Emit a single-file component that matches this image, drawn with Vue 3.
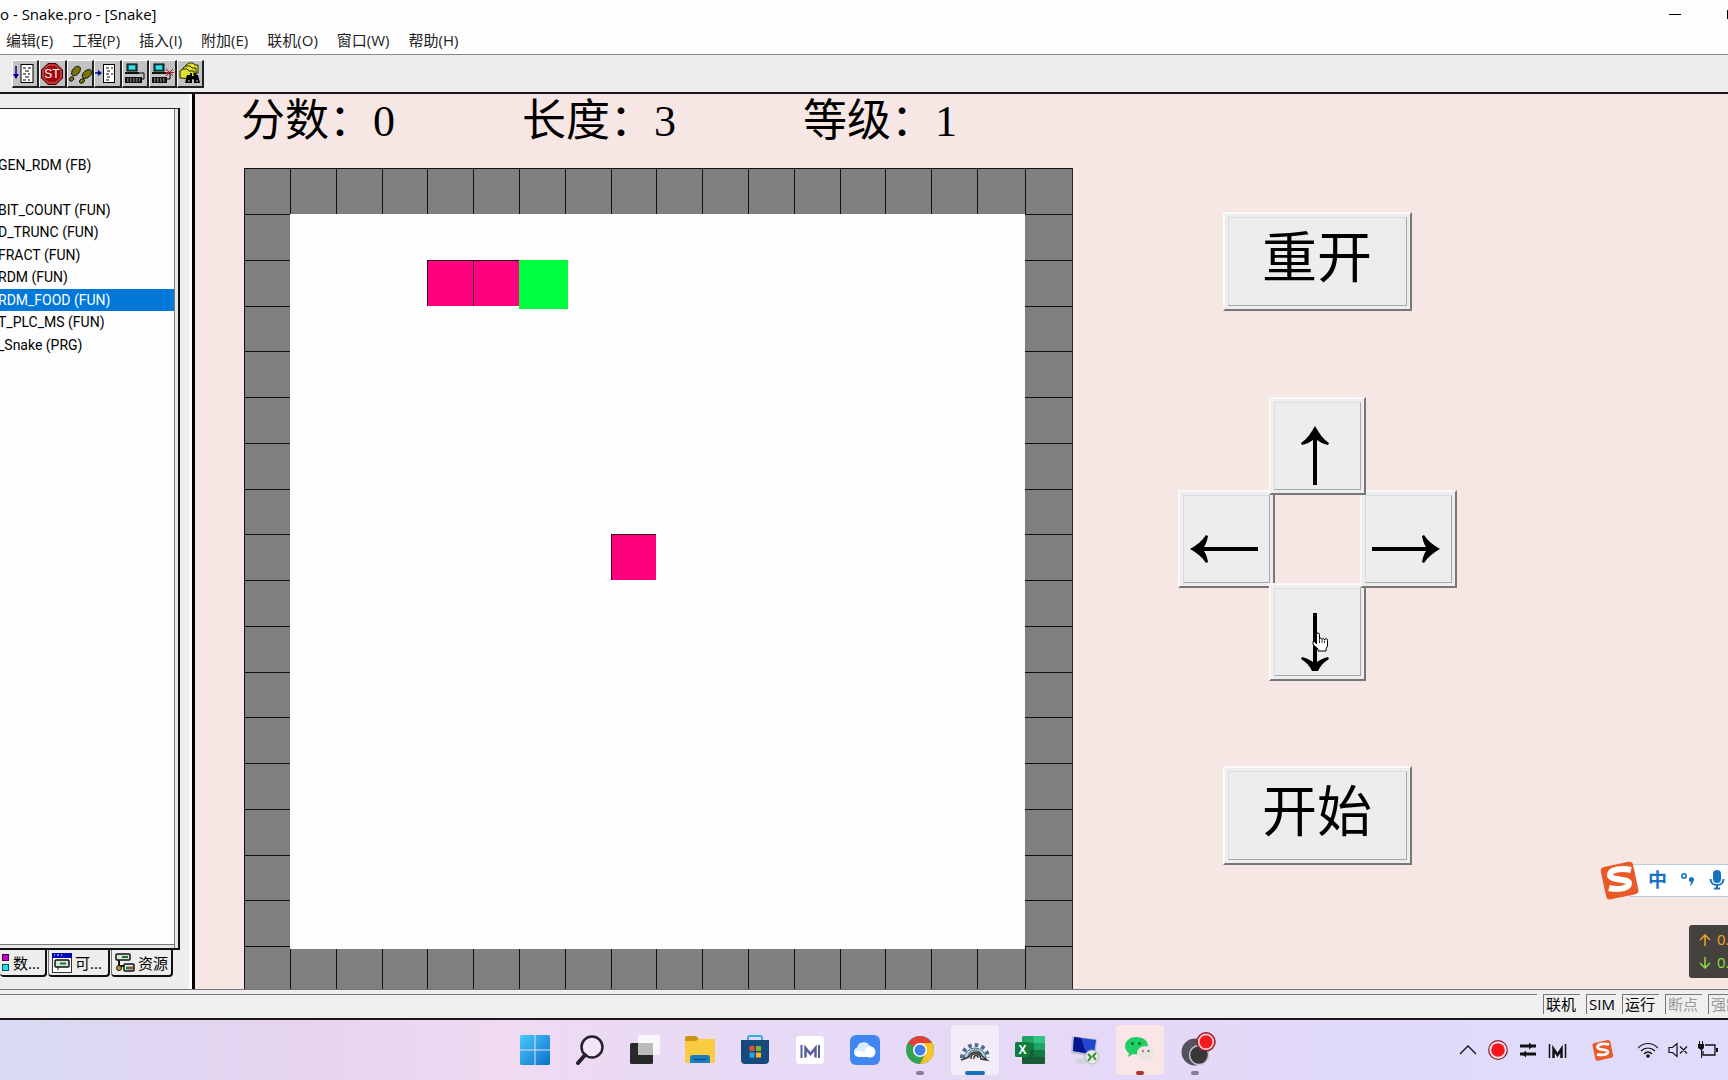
<script setup>
import { ref } from 'vue'

const menus = ['编辑(E)', '工程(P)', '插入(I)', '附加(E)', '联机(O)', '窗口(W)', '帮助(H)']

const pous = [
  'GEN_RDM (FB)',
  '',
  'BIT_COUNT (FUN)',
  'D_TRUNC (FUN)',
  'FRACT (FUN)',
  'RDM (FUN)',
  'RDM_FOOD (FUN)',
  'T_PLC_MS (FUN)',
  '_Snake (PRG)',
]
const selected = ref('RDM_FOOD (FUN)')

const stats = [
  { label: '分数', value: 0 },
  { label: '长度', value: 3 },
  { label: '等级', value: 1 },
]

const SIZE = 18
const walls = []
for (let row = 1; row <= SIZE; row++) {
  for (let col = 1; col <= SIZE; col++) {
    if (row > 1 && row < SIZE && col > 1 && col < SIZE) continue
    walls.push({
      row,
      col,
      noTop: row === SIZE && col > 1 && col < SIZE,
      noLeft: col === SIZE && row > 1 && row < SIZE,
    })
  }
}
const pieces = [
  { kind: 'body', row: 3, col: 5 },
  { kind: 'body', row: 3, col: 6 },
  { kind: 'head', row: 3, col: 7 },
  { kind: 'food', row: 9, col: 9 },
]
const place = (c) => ({ gridRow: c.row, gridColumn: c.col })

const status = [
  { text: '联机' },
  { text: 'SIM', small: true },
  { text: '运行' },
  { text: '断点', off: true },
  { text: '强制', off: true },
]
</script>

<template>
  <div class="app" lang="zh-CN">
    <header class="titlebar">
      <span class="title">o - Snake.pro - [Snake]</span>
      <div class="winctl">
        <button class="min" aria-label="最小化"></button>
        <button class="max" aria-label="最大化"></button>
      </div>
    </header>

    <nav class="menubar">
      <button v-for="m in menus" :key="m">{{ m }}</button>
    </nav>

    <div class="toolbar">
      <div class="tools">
        <button aria-label="单步进入">
          <svg viewBox="0 0 24 24">
            <rect x="8" y="2.500" width="12" height="18" fill="#fff" stroke="#000" />
            <path d="M10 6h3m2 0h3M12 9h4M10 12h3m2 0h2M12 15h4M10 18h3m2 0h2" stroke="#000" />
            <path d="M3 4v12" stroke="#00009c" stroke-width="1.500" />
            <path d="M0 12h6l-3 5z" fill="#00009c" />
          </svg>
        </button>
        <button aria-label="停止">
          <svg viewBox="0 0 24 24">
            <path d="M8 1.500h8L22.500 8v8L16 22.500H8L1.500 16V8z" fill="#a3080c" stroke="#4a0000" />
            <path d="M8.500 3h7L21 8.500v7L15.500 21h-7L3 15.500v-7z" fill="none" stroke="#d99" stroke-width=".7" />
            <text x="12" y="16" text-anchor="middle" class="st">ST</text>
          </svg>
        </button>
        <button aria-label="单步">
          <svg viewBox="0 0 24 24">
            <g fill="#77750a" stroke="#000" stroke-width=".8">
              <ellipse cx="8" cy="9" rx="5.500" ry="3.500" transform="rotate(-50 8 9)" />
              <ellipse cx="3.500" cy="17" rx="2.500" ry="2" transform="rotate(-40 3.500 17)" />
              <ellipse cx="19" cy="12" rx="5.500" ry="3.500" transform="rotate(-40 19 12)" />
              <ellipse cx="14" cy="19" rx="2.800" ry="2" transform="rotate(-30 14 19)" />
            </g>
          </svg>
        </button>
        <button aria-label="运行到光标">
          <svg viewBox="0 0 24 24">
            <rect x="8.500" y="2.500" width="11" height="18" fill="#fff" stroke="#000" />
            <path d="M11 6h3m2 0h2M12 9h3M11 12h3m2 0h2M12 15h3M11 18h3" stroke="#000" />
            <path d="M0 11h4" stroke="#00009c" stroke-width="1.500" />
            <path d="M3 8l4 3-4 3z" fill="#00009c" />
          </svg>
        </button>
        <button aria-label="登录">
          <svg viewBox="0 0 24 24">
            <rect x="4" y="2" width="10" height="7" fill="#0b6f78" stroke="#000" />
            <rect x="6" y="3.500" width="6" height="4" fill="#3fe0e0" />
            <path d="M2 10h14v2H2zM2 15h17v6H2z" fill="#111" />
            <path d="M16 11h5v6h-3" fill="none" stroke="#000" />
            <path d="M4 17h13M4 19h13" stroke="#bbb" stroke-dasharray="1.500 1.500" />
          </svg>
        </button>
        <button aria-label="注销">
          <svg viewBox="0 0 24 24">
            <rect x="4" y="2" width="10" height="7" fill="#0b6f78" stroke="#000" />
            <rect x="6" y="3.500" width="6" height="4" fill="#3fe0e0" />
            <path d="M2 10h14v2H2zM2 15h15v6H2z" fill="#111" />
            <path d="M15 11h5v6h-3" fill="none" stroke="#000" />
            <path d="M4 17h12M4 19h12" stroke="#bbb" stroke-dasharray="1.500 1.500" />
            <path d="M16 7l7 7m0-7l-7 7M15 10.500h9" stroke="#b01020" />
          </svg>
        </button>
        <button aria-label="全局查找">
          <svg viewBox="0 0 24 24">
            <g fill="#dede2c" stroke="#000" stroke-width=".8">
              <path d="M8 3l3-2h4l2 2h3v8H8z" />
              <path d="M5 6l3-2h4l2 2h4v8H5z" />
              <path d="M2 9l3-2h4l2 2h5v8l-14-1z" />
            </g>
            <path d="M9 13h3v-2h2v3h2v-3h2v2h2l2 8h-6v-4h-2v4H7z" fill="#000" />
            <path d="M10 19h2m6 0h2" stroke="#ddd" />
          </svg>
        </button>
      </div>
    </div>

    <main class="workspace">
      <aside class="sidebar">
        <div class="tree">
          <ul>
            <li v-for="(p, i) in pous" :key="i" :class="{ on: p === selected }">{{ p }}</li>
          </ul>
        </div>
        <div class="tabs">
          <button class="tab cut">
            <svg viewBox="0 0 20 20" class="ticon">
              <path d="M9 5H4v10h6M4 10H0" fill="none" stroke="#555" />
              <rect x="12.500" y="1.500" width="6" height="6" fill="#c800c8" stroke="#404" />
              <rect x="12.500" y="11.500" width="6" height="6" fill="#17e0ea" stroke="#055" />
            </svg>
            <span>数...</span>
          </button>
          <button class="tab">
            <svg viewBox="0 0 20 20" class="ticon">
              <rect x=".5" y=".5" width="19" height="19" fill="#fff" stroke="#333" />
              <rect x="0" y="0" width="20" height="5" fill="#0606bb" />
              <path d="M2 2h1m2 0h2m2 0h1" stroke="#fff" />
              <rect x="3" y="7" width="14" height="7" rx="1" fill="#d5ead5" stroke="#111" stroke-width="1.500" />
              <path d="M8 10.500h6" stroke="#286b38" stroke-width="2" />
              <path d="M6 14v3" stroke="#111" />
            </svg>
            <span>可...</span>
          </button>
          <button class="tab">
            <svg viewBox="0 0 20 20" class="ticon">
              <rect x="1" y="1" width="14" height="6" rx="1" fill="#d5ead5" stroke="#111" stroke-width="1.500" />
              <path d="M7 4h6" stroke="#286b38" stroke-width="2" />
              <path d="M4 7v10M4 13h6" stroke="#111" stroke-width="2" />
              <rect x="9" y="11" width="10" height="7" rx="1" fill="#eee" stroke="#111" stroke-width="1.500" />
              <path d="M11 15h4" stroke="#1d8a38" stroke-width="3" />
              <path d="M15 15h3" stroke="#c33" stroke-width="3" />
              <circle cx="4" cy="15" r="2.500" fill="#b9a400" stroke="#111" />
            </svg>
            <span>资源</span>
          </button>
        </div>
      </aside>

      <section class="canvas">
        <div class="game">
          <div class="stats">
            <span v-for="s in stats" :key="s.label">{{ s.label }}：{{ s.value }}</span>
          </div>
          <div class="board">
            <i v-for="w in walls" :key="w.row + '-' + w.col" class="wall" :class="{ noTop: w.noTop, noLeft: w.noLeft }" :style="place(w)"></i>
            <i class="field"></i>
            <i v-for="(p, i) in pieces" :key="i" class="piece" :class="p.kind" :style="place(p)"></i>
          </div>
        </div>

        <div class="controls">
          <button class="raised wide">重开</button>
          <div class="pad">
            <button class="raised dir left" aria-label="左">
              <svg viewBox="0 0 68 28" width="68" height="28"><path d="M0 14C7 10 12 6 16 0l2 1c-1 5-2 8-4 11h54v4H14c2 3 3 6 4 11l-2 1C12 22 7 18 0 14z" /></svg>
            </button>
            <button class="raised dir down" aria-label="下">
              <svg viewBox="0 0 28 60" width="28" height="60"><path d="M11 59C9 54 5 50 0 47l1-2c5 1 8 3 11 5V1h4v49c3-2 6-4 11-5l1 2c-5 3-9 7-11 12z" /></svg>
              <svg class="hand" viewBox="0 0 17 20" width="17" height="20">
                <path d="M4.500 12V2.500a1.500 1.500 0 0 1 3 0V7a1.300 1.300 0 0 1 2.500 0v.5a1.300 1.300 0 0 1 2.500.5 1.300 1.300 0 0 1 3 .5V14l-1.500 3v2h-8v-2L1 12.500V9.500h1.500z" fill="#fff" stroke="#000" />
                <path d="M7.500 7v4M10 8v3M12.500 8.500V11" stroke="#000" stroke-width=".8" />
              </svg>
            </button>
            <button class="raised dir right" aria-label="右">
              <svg viewBox="0 0 68 28" width="68" height="28"><path d="M68 14C61 10 56 6 52 0l-2 1c1 5 2 8 4 11H0v4h54c-2 3-3 6-4 11l2 1c4-6 9-10 16-14z" /></svg>
            </button>
            <button class="raised dir up" aria-label="上">
              <svg viewBox="0 0 28 60" width="28" height="60"><path d="M14 0C10 7 6 13 0 17l1 2c5-1 8-3 11-5v45h4V14c3 2 6 4 11 5l1-2C22 13 18 7 14 0z" /></svg>
            </button>
          </div>
          <button class="raised wide">开始</button>
        </div>

        <div class="ime">
          <svg class="imelogo" viewBox="0 0 40 40" width="40" height="40">
            <rect x="3" y="4" width="33" height="33" rx="4" fill="#ea5a28" transform="rotate(-12 20 20)" />
            <path d="M31 10C22 8 10 9 10 15c0 6 20 3 19 9-1 5-12 6-20 4" fill="none" stroke="#fff" stroke-width="6" />
          </svg>
          <div class="imebar">
            <b>中</b>
            <svg viewBox="0 0 16 16" width="16" height="16"><circle cx="4" cy="4" r="2.200" fill="none" stroke="#1673c4" stroke-width="1.600" /><path d="M9 7a2.500 2.500 0 1 1 4.500 2c-1 3-2 4-4 5 1-2 1.500-3 1.500-4A2.500 2.500 0 0 1 9 7z" fill="#1673c4" /></svg>
            <svg viewBox="0 0 16 20" width="16" height="20"><rect x="4" y="0" width="8" height="13" rx="4" fill="#1673c4" /><path d="M1.500 9c0 8 13 8 13 0M8 15v4M5 18.500h6" fill="none" stroke="#1673c4" stroke-width="2" /></svg>
          </div>
        </div>

        <div class="net">
          <span class="upl"><svg viewBox="0 0 12 12" width="12" height="12"><path d="M6 12V1M1 6l5-5 5 5" /></svg>0.1K</span>
          <span class="dnl"><svg viewBox="0 0 12 12" width="12" height="12"><path d="M6 0v11M1 6l5 5 5-5" /></svg>0.1K</span>
        </div>
      </section>
    </main>

    <footer class="status">
      <span class="msg"></span>
      <span v-for="s in status" :key="s.text" class="ind" :class="{ off: s.off, small: s.small }">{{ s.text }}</span>
    </footer>

    <footer class="taskbar">
      <span></span>
      <div class="apps">
        <button aria-label="开始菜单">
          <svg viewBox="0 0 30 30" width="30" height="30">
            <defs><linearGradient id="win" x1="0" y1="0" x2="1" y2="1"><stop offset="0" stop-color="#4cc8fb" /><stop offset="1" stop-color="#0672cb" /></linearGradient></defs>
            <rect width="30" height="30" rx="1.500" fill="url(#win)" />
            <path d="M15 0v30M0 15h30" stroke="#ecdcf6" />
          </svg>
        </button>
        <button aria-label="搜索">
          <svg viewBox="0 0 30 30" width="30" height="30"><circle cx="17" cy="12" r="10.500" fill="#ffffff55" stroke="#25222b" stroke-width="2.500" /><path d="M10 20l-7 8" stroke="#25222b" stroke-width="4" stroke-linecap="round" /></svg>
        </button>
        <button aria-label="任务视图">
          <svg viewBox="0 0 30 30" width="30" height="30"><rect x="0" y="8" width="23" height="21" rx="1.500" fill="#2a2929" /><rect x="8" y="0" width="22" height="20" rx="1.500" fill="#fff" fill-opacity=".75" /><path d="M8 8h15v12H8z" fill="#bbb" /></svg>
        </button>
        <button aria-label="文件资源管理器">
          <svg viewBox="0 0 30 30" width="30" height="30"><path d="M0 3q0-2 2-2h9l3 3v6H0z" fill="#c99513" /><path d="M0 6h11l3-2h16v22q0 2-2 2H2q-2 0-2-2z" fill="#fbcb40" /><path d="M5 28v-5q0-3 3-3h14q3 0 3 3v5z" fill="#1c7cc0" /><path d="M9 24.500h12" stroke="#0b4f86" stroke-width="1.500" /></svg>
        </button>
        <button aria-label="应用商店">
          <svg viewBox="0 0 30 30" width="30" height="30"><path d="M8 6V3q0-2 2-2h10q2 0 2 2v3" fill="none" stroke="#35aee3" stroke-width="2" /><path d="M1 5h28v20q0 4-4 4H5q-4 0-4-4z" fill="#17497c" /><path d="M9.500 11h5v5h-5z" fill="#f1502f" /><path d="M16 11h5v5h-5z" fill="#7eba28" /><path d="M9.500 17.500h5v5h-5z" fill="#2aa5e8" /><path d="M16 17.500h5v5h-5z" fill="#fbb922" /></svg>
        </button>
        <button aria-label="电脑管家">
          <svg viewBox="0 0 30 30" width="30" height="30"><rect x="1" y="1" width="28" height="28" rx="4" fill="#fff" /><path d="M6.500 10v13M24 10v13" stroke="#4c5f9e" stroke-width="2" /><path d="M10.500 22.500V13l5 6 5-6v9.500" fill="none" stroke="#5c5a9c" stroke-width="2.500" /></svg>
        </button>
        <button aria-label="云盘">
          <svg viewBox="0 0 30 30" width="30" height="30"><rect width="30" height="30" rx="6" fill="#3f86f2" /><path d="M8 22a5 5 0 0 1-1-9.500A7 7 0 0 1 20 11a6 6 0 0 1 2 11z" fill="#d9ebff" /><circle cx="20" cy="17" r="5.500" fill="#fff" /><path d="M9 22q-5-1-4-5c5-3 10 0 12 5z" fill="#fff" /></svg>
        </button>
        <button aria-label="Chrome" class="run">
          <svg viewBox="0 0 30 30" width="30" height="30"><circle cx="15" cy="15" r="14" fill="#33a352" /><path d="M15 15L2.900 8A14 14 0 0 1 27.100 8z" fill="#df3f34" /><path d="M15 8h12.100A14 14 0 0 1 15 29l6-11z" fill="#fbc324" /><circle cx="15" cy="15" r="7" fill="#fff" /><circle cx="15" cy="15" r="5.500" fill="#4181ec" /></svg>
        </button>
        <button aria-label="CoDeSys" class="run active">
          <svg viewBox="0 0 30 30" width="30" height="30">
            <path d="M2 23A13 13 0 1 1 28 23" fill="none" stroke="#4d6f87" stroke-width="4" stroke-dasharray="3.500 3.200" />
            <path d="M4 24A11 11 0 1 1 26 24L22 22A7 7 0 0 0 8 22z" fill="#b9d3e3" stroke="#4d6f87" />
            <path d="M9 22A7 7 0 0 1 22 21l5 4-6-1c-1-7-11-7-10 0" fill="#e9eff2" stroke="#333" stroke-width="1.500" />
            <path d="M1 25l8-3M18 23c0-4-5-3-4 1" fill="none" stroke="#333" stroke-width="1.500" />
          </svg>
        </button>
        <button aria-label="Excel">
          <svg viewBox="0 0 30 30" width="30" height="30"><rect x="7" y="1" width="23" height="28" rx="1.500" fill="#21a366" /><path d="M18.500 1H28.500q1.500 0 1.500 1.500V8H18.500z" fill="#33c481" /><path d="M7 8h12v7H7z" fill="#107c41" /><path d="M7 15h23v13q0 1-1.500 1h-20Q7 29 7 27.500z" fill="#185c37" /><path d="M18.500 15H30v7H18.500z" fill="#107c41" /><rect x="0" y="7" width="15" height="15" rx="1.500" fill="#107c41" /><text x="7.500" y="18.500" text-anchor="middle" class="xl">X</text></svg>
        </button>
        <button aria-label="远程桌面">
          <svg viewBox="0 0 30 30" width="30" height="30"><ellipse cx="12" cy="26" rx="7" ry="3" fill="#d3d5dc" /><path d="M2 1l25 3-2 18L1 18z" fill="#b9bdd0" /><path d="M4 2l22 3-2 15-21-4z" fill="#2148cf" /><path d="M4 2l7 1 5 15-13-2z" fill="#07168e" /><circle cx="22" cy="22" r="7" fill="#e5e9e4" stroke="#a2aaa2" stroke-width=".7" /><path d="M18 19l3 3-3 4M26 18l-3 3 3 4" fill="none" stroke="#2c8f2c" stroke-width="1.800" /></svg>
        </button>
        <button aria-label="微信" class="run alert">
          <svg viewBox="0 0 30 30" width="32" height="30"><path d="M11 2C5 2 0 6 0 11c0 3 2 6 4 7l-1 4 5-3c9 2 15-3 15-8 0-6-6-9-12-9z" fill="#1fcf63" /><circle cx="7.500" cy="8.500" r="1.500" fill="#0c6d36" /><circle cx="14.500" cy="8.500" r="1.500" fill="#0c6d36" /><path d="M21 11c-5 0-9 3-9 7 0 5 6 8 12 6l3 2v-3c7-5 1-12-6-12z" fill="#e9e5e3" /><circle cx="18" cy="16" r="1.200" fill="#b77" /><circle cx="23.500" cy="16" r="1.200" fill="#777" /></svg>
        </button>
        <button aria-label="录屏" class="run">
          <svg viewBox="-6 0 42 36" width="42" height="36"><circle cx="15" cy="20" r="13.500" fill="#55525b" /><circle cx="19" cy="23" r="9.500" fill="#383838" stroke="#c9c3d4" stroke-width="1.500" /><circle cx="26" cy="9.800" r="9" fill="#f3cdd3" stroke="#9c1226" stroke-width="1.500" /><circle cx="26" cy="9.800" r="6.500" fill="#f51a20" /></svg>
        </button>
      </div>
      <div class="tray">
        <button aria-label="显示隐藏的图标"><svg viewBox="0 0 20 20" width="20" height="20"><path d="M2 14l8-8 8 8" fill="none" stroke="#111" stroke-width="1.300" /></svg></button>
        <button aria-label="录制中"><svg viewBox="0 0 20 20" width="20" height="20"><circle cx="10" cy="10" r="9.300" fill="#fbe3e8" stroke="#8e1a35" stroke-width="1.200" /><circle cx="10" cy="10" r="6.800" fill="#f3161c" /></svg></button>
        <button aria-label="设备切换"><svg viewBox="0 0 20 20" width="20" height="20"><path d="M2 6h16M2 14h16" stroke="#111" stroke-width="3" /><path d="M11 2.500l4 3.500-4 3.500zM8 10.500L4 14l4 3.500z" fill="#111" /></svg></button>
        <button aria-label="管家"><svg viewBox="0 0 20 20" width="20" height="20"><path d="M1.500 4v14M17.500 4v14" stroke="#111" stroke-width="1.500" /><path d="M5.500 18V9l4 6 4-6v9" fill="none" stroke="#111" stroke-width="2.500" /></svg></button>
        <button aria-label="输入法" class="sg"><svg viewBox="0 0 40 40" width="22" height="22"><rect x="3" y="4" width="33" height="33" rx="4" fill="#ea5a28" transform="rotate(-12 20 20)" /><path d="M31 10C22 8 10 9 10 15c0 6 20 3 19 9-1 5-12 6-20 4" fill="none" stroke="#fff" stroke-width="5" /></svg></button>
        <button aria-label="无线网络"><svg viewBox="0 0 20 20" width="20" height="20"><g fill="none" stroke="#111" stroke-width="1.200"><path d="M0 8c6-6 14-6 20 0M3 11c4-4 10-4 14 0M6 14c2.500-2.500 5.500-2.500 8 0" /></g><circle cx="10" cy="16" r="1.800" fill="#111" /></svg></button>
        <button aria-label="静音"><svg viewBox="0 0 20 20" width="20" height="20"><path d="M1 7.500h3.500L9 3.500v13l-4.500-4H1zM12 6.500l7 7m0-7l-7 7" fill="none" stroke="#111" stroke-width="1.200" /></svg></button>
        <button aria-label="电源"><svg viewBox="0 0 20 20" width="20" height="20"><path d="M7 5h10v10H5v-4" fill="none" stroke="#111" stroke-width="1.300" /><path d="M18 8h2v4h-2zM0 4h6v4l-2 2v8H3v-8L0 8zM1 1h1v3H1zM4 1h1v3H4z" fill="#111" /></svg></button>
      </div>
    </footer>
  </div>
</template>

<style>
body {
  margin: 0;
  overflow: hidden;
}
</style>

<style scoped>
.app {
  min-height: 100vh;
  display: flex;
  flex-direction: column;
  overflow: hidden;
  background: #ededed;
  color: #000;
  font-family: "Open Sans", "Noto Sans CJK SC", sans-serif;
  white-space: nowrap;
}
.app *,
.app *::before {
  box-sizing: border-box;
}
button {
  margin: 0;
  padding: 0;
  border: 0;
  background: none;
  color: inherit;
  font: inherit;
}
svg {
  display: block;
  flex: none;
}

/* title, menu and toolbar */
.titlebar {
  display: flex;
  justify-content: space-between;
  height: 28px;
  background: #fdfdfd;
}
.title {
  font-size: 15px;
  line-height: 28px;
}
.winctl {
  display: flex;
  align-items: center;
  gap: 46px;
}
.min {
  width: 12px;
  height: 1px;
  background: #000;
}
.max {
  width: 1px;
  height: 9px;
  background: #000;
}
.menubar {
  display: flex;
  gap: 19px;
  height: 27px;
  padding-left: 6px;
  border-bottom: 1px solid #858585;
  background: #fdfdfd;
  font-size: 15px;
  line-height: 24px;
  color: #222;
}
.menubar button {
  height: 24px;
}
.toolbar {
  height: 39px;
  padding: 5px 12px;
  border-bottom: 2px solid #1c1416;
}
.tools {
  display: flex;
  width: 192px;
  height: 28px;
}
.tools button {
  flex: 1;
  border: 1px solid #fff;
  border-right: 2px solid #222;
  border-bottom: 2px solid #222;
  background: #c3c3c3;
}
.tools svg {
  width: 24px;
  height: 24px;
}
.st {
  font: 12px "Liberation Sans", sans-serif;
  fill: #fff;
}

/* project tree */
.workspace {
  flex: 1;
  display: flex;
}
.sidebar {
  flex: none;
  display: flex;
  flex-direction: column;
  width: 195px;
  padding: 14px 11px 12px 0;
  border-right: 3px solid #000;
  box-shadow: inset -3px 0 #fdfdfd;
}
.tree {
  flex: 1;
  width: 180px;
  padding-top: 45px;
  padding-right: 3px;
  border-top: 1px solid #222;
  border-right: 2px solid #111;
  border-bottom: 2px solid #111;
  background:
    linear-gradient(#777, #777) 174px 0 / 1px 100% no-repeat,
    linear-gradient(#e8e8e8, #e8e8e8) 0 100% / 100% 3px no-repeat,
    linear-gradient(#777, #777) 0 calc(100% - 3px) / 174px 1px no-repeat,
    linear-gradient(to right, #fdfdfd 175px, #e8e8e8 175px);
}
.tree ul {
  display: grid;
  grid-auto-rows: 1fr;
  width: 174px;
  height: 202px;
  margin: 0;
  padding: 0;
  list-style: none;
  font: 14px/22px Roboto, sans-serif;
}
.tree li {
  text-indent: -2px;
}
.tree .on {
  background: #0078d7;
  color: #fff;
}
.tabs {
  display: flex;
  gap: 1px;
  height: 27px;
}
.tab {
  display: flex;
  align-items: center;
  gap: 3px;
  width: 62px;
  padding-left: 3px;
  border: 1px solid #777;
  border-top: 0;
  border-right: 2px solid #111;
  border-bottom: 2px solid #111;
  border-radius: 0 0 4px 4px;
  font-size: 15px;
}
.tab.cut {
  width: 47px;
  padding-left: 0;
  border-left: 0;
}
.cut .ticon {
  margin-left: -10px;
}
.ticon {
  width: 20px;
  height: 20px;
}

/* visualization */
.canvas {
  position: relative;
  flex: 1;
  display: flex;
  gap: 105px;
  padding-left: 49px;
  overflow: hidden;
  background: #f6e7e5;
}
.game {
  flex: none;
  width: 829px;
}
.stats {
  display: flex;
  height: 74px;
  margin-left: -3px;
  font: 44px/56px "Liberation Serif", "Noto Sans CJK SC", serif;
}
.stats span {
  flex: none;
  width: 281px;
}
.board {
  display: grid;
  grid-template-columns: 46px repeat(15, 1fr) 48px 47px;
  grid-template-rows: 46px repeat(16, 1fr) 43px;
  height: 821px;
  border-right: 1px solid #222;
}
.wall {
  border-top: 1px solid #111;
  border-left: 1px solid #111;
  background: #7f7f7f;
}
.noTop {
  border-top: 0;
}
.noLeft {
  border-left: 0;
}
.field {
  grid-area: 2 / 2 / 18 / 18;
  margin-bottom: -3px;
  background: #fdfdfd;
}
.piece {
  border-top: 1px solid #3a0020;
  border-left: 1px solid #3a0020;
  background: #ff007f;
}
.piece.head {
  margin: 0 -3px -3px 0;
  border: 0;
  background: #00ff3f;
}
.controls {
  display: flex;
  flex-direction: column;
  align-items: center;
  gap: 86px;
  padding-top: 118px;
}
.raised {
  position: relative;
  border: 2px solid #fbf9f8;
  border-right: 2px solid #777;
  border-bottom: 2px solid #777;
  background: #ededed;
}
.raised::before {
  content: "";
  position: absolute;
  inset: 3px;
  border: 1px solid #d9dddd;
  border-right-color: #a4a8aa;
  border-bottom-color: #a4a8aa;
}
.wide {
  width: 189px;
  height: 99px;
  padding-bottom: 12px;
  font-size: 55px;
  line-height: 80px;
}
.pad {
  display: grid;
  grid-template-columns: repeat(3, 91px);
  grid-template-rows: repeat(3, 93px);
  width: 278px;
  height: 283px;
}
.dir {
  display: flex;
  align-items: center;
  justify-content: center;
  width: 97px;
  height: 98px;
  padding: 20px 6px 0 0;
}
.left {
  grid-area: 2 / 1;
}
.down {
  grid-area: 3 / 2;
}
.right {
  grid-area: 2 / 3;
}
.up {
  grid-area: 1 / 2;
}
.hand {
  position: absolute;
  left: 41px;
  top: 47px;
}

/* floating widgets */
.ime {
  position: absolute;
  right: 0;
  bottom: 89px;
  display: flex;
  align-items: center;
}
.imelogo {
  position: relative;
  z-index: 1;
}
.imebar {
  display: flex;
  align-items: center;
  gap: 13px;
  width: 98px;
  height: 33px;
  margin-left: -10px;
  padding-left: 17px;
  border: 1px solid #b6cde2;
  border-right: 0;
  background: #fff;
  color: #1673c4;
  font-size: 19px;
}
.imebar b {
  line-height: 30px;
}
.net {
  position: absolute;
  right: 0;
  bottom: 11px;
  width: 39px;
  height: 53px;
  padding: 3px 0 0 10px;
  overflow: hidden;
  border-radius: 3px 0 0 3px;
  background: #45423e;
  font-size: 15px;
  line-height: 23px;
}
.net span {
  display: flex;
  align-items: center;
  gap: 6px;
}
.net svg {
  fill: none;
  stroke: currentColor;
  stroke-width: 1.5px;
}
.upl {
  color: #f2a32c;
}
.dnl {
  color: #8fdc3c;
}

/* status line */
.status {
  display: flex;
  gap: 6px;
  height: 31px;
  padding: 4px 0;
  overflow: hidden;
  border-top: 1px solid #777;
  border-bottom: 2px solid #1c1416;
  background: #efefef;
  font-size: 15px;
  line-height: 19px;
}
.msg {
  flex: 1;
  border-top: 1px solid #777;
}
.ind {
  flex: none;
  width: 37px;
  padding-left: 2px;
  border-top: 1px solid #777;
  border-left: 1px solid #777;
}
.ind.small {
  width: 30px;
}
.ind.off {
  color: #999;
}
.ind:last-child {
  width: 20px;
}

/* taskbar */
.taskbar {
  display: grid;
  grid-template-columns: 1fr auto 1fr;
  align-items: center;
  height: 60px;
  background: linear-gradient(90deg, #d8daf3 0, #e5d3ef 17%, #efdaf1 29%, #e7daf7 45%, #e5d9f6 62%, #e0dafb 85%, #e0dafb 100%);
}
.apps {
  display: flex;
  gap: 7px;
  padding-left: 1px;
}
.apps button {
  position: relative;
  display: flex;
  align-items: center;
  justify-content: center;
  width: 48px;
  height: 50px;
  border-radius: 4px;
}
.run::before {
  content: "";
  position: absolute;
  bottom: 0;
  left: 20px;
  width: 8px;
  height: 4px;
  border-radius: 2px;
  background: #877d9b;
}
.apps .active {
  background: #f3edf9;
}
.active::before {
  left: 14px;
  width: 20px;
  background: #1673b9;
}
.apps .alert {
  background: #fae5e7;
}
.alert::before {
  background: #b0342c;
}
.xl {
  font: bold 12px "Liberation Sans", sans-serif;
  fill: #fff;
}
.tray {
  display: flex;
  justify-content: flex-end;
  padding-right: 5px;
}
.tray button {
  display: flex;
  justify-content: center;
  align-items: center;
  width: 30px;
  height: 30px;
}
.tray .sg {
  margin: 0 15px;
}
</style>
